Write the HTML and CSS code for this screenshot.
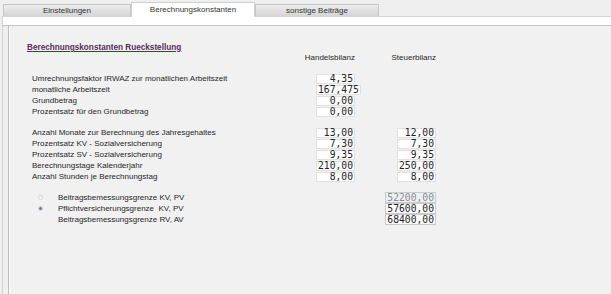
FILE: index.html
```html
<!DOCTYPE html>
<html lang="de">

<head>
    <meta charset="UTF-8">
    <meta name="viewport" content="width=device-width, initial-scale=1.0">
    <title>Berechnungskonstanten</title>
    <link rel="stylesheet" href="styles.css">
</head>

<body>
    <div class="tabs">
        <div class="tab">Einstellungen</div>
        <div class="tab active">Berechnungskonstanten</div>
        <div class="tab">sonstige Beiträge</div>
    </div>

    <div class="frame">
        <div class="strip"></div>

        <div class="panel">
            <h1 class="title">Berechnungskonstanten Rueckstellung</h1>

            <!-- Spaltenköpfe -->
            <div class="group heads">
                <span></span>
                <span class="head-left"><span>Handelsbilanz</span></span>
                <span class="head-right">Steuerbilanz</span>
            </div>

            <!-- Gruppe 1 -->
            <div class="group">
                <span class="label">Umrechnungsfaktor IRWAZ zur monatlichen Arbeitszeit</span>
                <span class="box">4,35</span>
                <span></span>

                <span class="label">monatliche Arbeitszeit</span>
                <span class="box">167,475</span>
                <span></span>

                <span class="label">Grundbetrag</span>
                <span class="box">0,00</span>
                <span></span>

                <span class="label">Prozentsatz für den Grundbetrag</span>
                <span class="box">0,00</span>
                <span></span>
            </div>

            <!-- Gruppe 2 -->
            <div class="group">
                <span class="label">Anzahl Monate zur Berechnung des Jahresgehaltes</span>
                <span class="box">13,00</span>
                <span class="box right">12,00</span>

                <span class="label">Prozentsatz KV - Sozialversicherung</span>
                <span class="box">7,30</span>
                <span class="box right">7,30</span>

                <span class="label">Prozentsatz SV - Sozialversicherung</span>
                <span class="box">9,35</span>
                <span class="box right">9,35</span>

                <span class="label">Berechnungstage Kalenderjahr</span>
                <span class="box">210,00</span>
                <span class="box right">250,00</span>

                <span class="label">Anzahl Stunden je Berechnungstag</span>
                <span class="box">8,00</span>
                <span class="box right">8,00</span>
            </div>

            <!-- Gruppe 3 -->
            <div class="group limits">
                <span class="label option"><span class="radio"></span>Beitragsbemessungsgrenze KV, PV</span>
                <span class="box wide disabled">52200,00</span>

                <span class="label option"><span class="radio checked"></span>Pflichtversicherungsgrenze&nbsp; KV, PV</span>
                <span class="box wide">57600,00</span>

                <span class="label option"><span class="radio none"></span>Beitragsbemessungsgrenze RV, AV</span>
                <span class="box wide">68400,00</span>
            </div>
        </div>
    </div>
</body>

</html>
```

FILE: styles.css
```css
html,
body {
    margin: 0;
    height: 294px;
    overflow: hidden;
}

body {
    background-color: #efefef;
    font-family: "Liberation Sans", Arial, sans-serif;
    font-size: 8px;
    color: #262626;
}

.tabs {
    display: flex;
    align-items: flex-end;
    height: 16px;
    padding-left: 3px;
    position: relative;
    z-index: 1;
}

.tab {
    box-sizing: border-box;
    width: 124px;
    height: 12px;
    line-height: 11px;
    text-align: center;
    border: 1px solid #c6c6c6;
    border-bottom: none;
    background: linear-gradient(#ececec, #d5d5d5);
    color: #333;
}

.tab:first-child {
    width: 128px;
}

.tab.active {
    height: 15px;
    margin-bottom: -1px;
    line-height: 13px;
    background: #fff;
    border-color: #cfcfcf;
}

.frame {
    margin-left: 2px;
    border-left: 1px solid #d2d2d2;
    height: 278px;
    overflow: hidden;
}

.strip {
    height: 8px;
    background: #fff;
    border-top: 1px solid #d4d4d4;
    border-bottom: 1px solid #c4c4c4;
}

.panel {
    box-sizing: border-box;
    margin-left: 5px;
    height: 268px;
    border-left: 1px solid #bdbdbd;
    box-shadow: inset 1px 0 #fafafa;
    background-color: #f1f1f1;
    padding-top: 16px;
}

.title {
    margin: 0 0 0 18px;
    height: 10px;
    line-height: 11px;
    font-size: 8.2px;
    font-weight: bold;
    color: #5b2b5d;
    text-decoration: underline;
}

.group {
    display: grid;
    grid-template-columns: 284px 75px 45px;
    grid-auto-rows: 11px;
    margin: 10px 0 0 23px;
    line-height: 11px;
}

.group.heads {
    margin-top: 0;
}

.head-left {
    display: flex;
    justify-content: flex-end;
    width: 39px;
    white-space: nowrap;
}

.head-right {
    justify-self: end;
    white-space: nowrap;
}

.label {
    white-space: nowrap;
}

.box {
    box-sizing: border-box;
    justify-self: start;
    align-self: center;
    min-width: 39px;
    height: 10px;
    padding: 0 1px;
    border: 1px solid #e0e0e0;
    background: #fff;
    font-family: "DejaVu Sans Mono", monospace;
    font-size: 9.7px;
    line-height: 8px;
    text-align: right;
    color: #222;
}

.box.right {
    justify-self: end;
}

.limits .box.wide {
    grid-column: 2 / 4;
    justify-self: end;
    height: 11px;
    line-height: 9px;
    border-color: #cacaca;
}

.limits .box.disabled {
    background: #eef0f3;
    border-color: #c4ccd6;
    color: #8c8c8c;
}

.option {
    grid-column: 1;
    display: flex;
    align-items: center;
    padding-left: 6px;
}

.radio {
    box-sizing: border-box;
    width: 5px;
    height: 5px;
    margin-right: 15px;
    border-radius: 50%;
    border: 1px solid #d2d2d2;
    background: #f6f6f6;
}

.radio.checked {
    border-color: #c9cfd6;
    background: radial-gradient(circle, #6f7b88 0 1.3px, #e6e9ed 1.6px);
}

.radio.none {
    visibility: hidden;
}
```
